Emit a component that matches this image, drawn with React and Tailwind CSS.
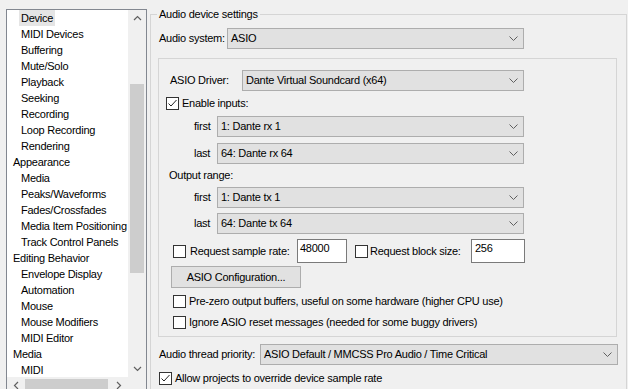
const tree = [
  ["Device", 1, true],
  ["MIDI Devices", 1],
  ["Buffering", 1],
  ["Mute/Solo", 1],
  ["Playback", 1],
  ["Seeking", 1],
  ["Recording", 1],
  ["Loop Recording", 1],
  ["Rendering", 1],
  ["Appearance", 0],
  ["Media", 1],
  ["Peaks/Waveforms", 1],
  ["Fades/Crossfades", 1],
  ["Media Item Positioning", 1],
  ["Track Control Panels", 1],
  ["Editing Behavior", 0],
  ["Envelope Display", 1],
  ["Automation", 1],
  ["Mouse", 1],
  ["Mouse Modifiers", 1],
  ["MIDI Editor", 1],
  ["Media", 0],
  ["MIDI", 1],
];

function Chevron() {
  return (
    <svg width="9" height="5" viewBox="0 0 9 5" className="ml-auto shrink-0">
      <path d="M0.5 0.5 L4.5 4.5 L8.5 0.5" fill="none" stroke="#606060" strokeWidth="1" />
    </svg>
  );
}

function Select({ value, className }) {
  return (
    <div
      className={`flex items-center h-[21px] border border-[#adadad] bg-[#e1e1e1] pl-[3px] pr-[5px] ${className}`}
    >
      <span>{value}</span>
      <Chevron />
    </div>
  );
}

function Check({ checked }) {
  return (
    <div className="w-[13px] h-[13px] border border-[#333] bg-white shrink-0 flex items-center justify-center">
      {checked && (
        <svg width="11" height="11" viewBox="0 0 11 11">
          <path d="M1.5 5.5 L4 8 L9.5 2" fill="none" stroke="#222" strokeWidth="1" />
        </svg>
      )}
    </div>
  );
}

function Arrow({ d }) {
  return (
    <svg width="9" height="9" viewBox="0 0 9 9">
      <path d={d} fill="none" stroke="#606060" strokeWidth="1.2" />
    </svg>
  );
}

export default function App() {
  return (
    <div
      className="w-[628px] h-[389px] overflow-hidden bg-[#f0f0f0] flex items-start text-[11px] tracking-[-0.25px] text-black"
      style={{ fontFamily: '"Liberation Sans", Arial, sans-serif' }}
    >
      {/* TREE */}
      <div className="ml-[6px] mt-[9px] w-[141px] h-[386px] border border-[#828790] bg-white flex flex-col shrink-0">
        <div className="flex h-[367px]">
          <div className="w-[121px] overflow-hidden">
            {tree.map(([label, lvl, sel], i) => (
              <div
                key={i}
                className={`h-[16px] flex items-center ${lvl ? "pl-[12px]" : "pl-[4px]"}`}
              >
                <span className={`px-[2px] leading-[16px] whitespace-nowrap ${sel ? "bg-[#e5e5e5]" : ""}`}>
                  {label}
                </span>
              </div>
            ))}
          </div>
          <div className="w-[18px] bg-[#f0f0f0] flex flex-col items-center">
            <div className="h-[17px] flex items-center justify-center">
              <Arrow d="M1 6 L4.5 2.5 L8 6" />
            </div>
            <div className="mt-[57px] w-[14px] h-[189px] bg-[#cdcdcd]" />
            <div className="mt-auto h-[17px] flex items-center justify-center">
              <Arrow d="M1 3 L4.5 6.5 L8 3" />
            </div>
          </div>
        </div>
        <div className="flex h-[17px]">
          <div className="w-[121px] bg-[#f0f0f0] flex items-center">
            <div className="w-[18px] flex justify-center">
              <Arrow d="M6 1 L2.5 4.5 L6 8" />
            </div>
            <div className="w-[83px] h-[14px] bg-[#cdcdcd]" />
            <div className="w-[20px] flex justify-center">
              <Arrow d="M3 1 L6.5 4.5 L3 8" />
            </div>
          </div>
          <div className="w-[18px] bg-[#f0f0f0]" />
        </div>
      </div>

      {/* AUDIO DEVICE SETTINGS */}
      <div className="relative ml-[3px] mt-[14px] w-[477px] h-[400px] border border-[#d5d5d5] shrink-0">
        <span className="absolute -top-[9px] left-[6px] px-[2px] bg-[#f0f0f0] leading-[16px]">
          Audio device settings
        </span>

        <div className="mt-[13px] flex items-center">
          <span className="w-[76px] pl-[8px]">Audio system:</span>
          <Select value="ASIO" className="w-[297px]" />
        </div>

        {/* ASIO box */}
        <div className="ml-[7px] mt-[9px] w-[459px] h-[279px] border border-[#d5d5d5]">
          <div className="mt-[11px] flex items-center">
            <span className="w-[83px] pl-[11px]">ASIO Driver:</span>
            <Select value="Dante Virtual Soundcard (x64)" className="w-[282px]" />
          </div>

          <div className="mt-[6px] pl-[7px] flex items-center h-[13px]">
            <Check checked />
            <span className="ml-[3px]">Enable inputs:</span>
          </div>

          <div className="mt-[6px] flex items-center">
            <span className="w-[58px] pl-[35px]">first</span>
            <Select value="1: Dante rx 1" className="w-[307px]" />
          </div>
          <div className="mt-[6px] flex items-center">
            <span className="w-[58px] pl-[35px]">last</span>
            <Select value="64: Dante rx 64" className="w-[307px]" />
          </div>

          <div className="mt-[3px] pl-[10px] leading-[16px]">Output range:</div>

          <div className="mt-[4px] flex items-center">
            <span className="w-[58px] pl-[35px]">first</span>
            <Select value="1: Dante tx 1" className="w-[307px]" />
          </div>
          <div className="mt-[5px] flex items-center">
            <span className="w-[58px] pl-[35px]">last</span>
            <Select value="64: Dante tx 64" className="w-[307px]" />
          </div>

          <div className="mt-[5px] pl-[14px] flex items-center h-[24px]">
            <Check />
            <span className="ml-[4px] w-[107px] whitespace-nowrap">Request sample rate:</span>
            <div className="w-[50px] h-[24px] border border-[#7a7a7a] bg-white pl-[2px] leading-[16px]">48000</div>
            <div className="ml-[8px]">
              <Check />
            </div>
            <span className="ml-[2px] w-[101px] whitespace-nowrap">Request block size:</span>
            <div className="w-[54px] h-[24px] border border-[#7a7a7a] bg-white pl-[3px] leading-[16px]">256</div>
          </div>

          <div className="mt-[3px] ml-[12px] w-[130px] h-[22px] border border-[#adadad] bg-[#e1e1e1] flex items-center justify-center">
            ASIO Configuration...
          </div>

          <div className="mt-[5px] pl-[14px] flex items-center h-[16px]">
            <Check />
            <span className="ml-[3px]">Pre-zero output buffers, useful on some hardware (higher CPU use)</span>
          </div>
          <div className="mt-[5px] pl-[14px] flex items-center h-[16px]">
            <Check />
            <span className="ml-[3px]">Ignore ASIO reset messages (needed for some buggy drivers)</span>
          </div>
        </div>

        <div className="mt-[7px] flex items-center">
          <span className="w-[109px] pl-[8px]">Audio thread priority:</span>
          <Select value="ASIO Default / MMCSS Pro Audio / Time Critical" className="w-[358px]" />
        </div>

        <div className="mt-[5px] pl-[8px] flex items-center h-[16px]">
          <Check checked />
          <span className="ml-[3px]">Allow projects to override device sample rate</span>
        </div>
      </div>
    </div>
  );
}
